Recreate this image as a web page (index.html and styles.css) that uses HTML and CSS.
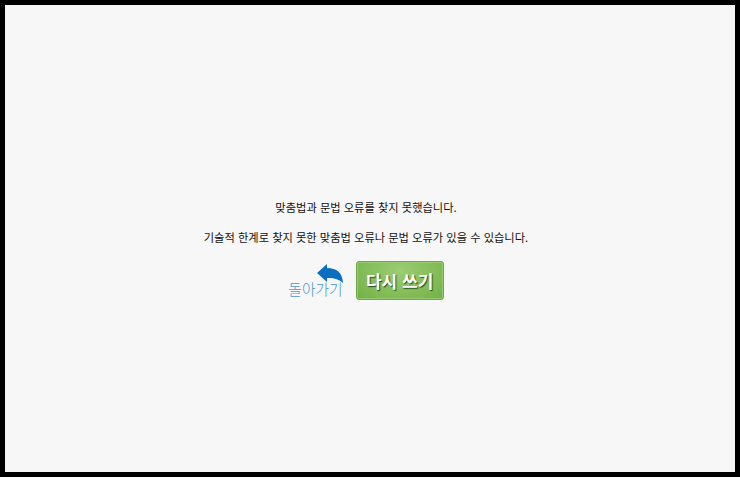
FILE: index.html
```html
<!DOCTYPE html>
<html lang="ko">
<head>
<meta charset="utf-8">
<title>맞춤법 검사</title>
<link rel="stylesheet" href="styles.css">
</head>
<body>
<main class="panel">
  <p class="msg">맞춤법과 문법 오류를 찾지 못했습니다.</p>
  <p class="msg">기술적 한계로 찾지 못한 맞춤법 오류나 문법 오류가 있을 수 있습니다.</p>
  <div class="actions">
    <a class="back" href="#">
      <svg class="back-icon" width="26" height="20" viewBox="0 0 26 20"><path d="M0 9 L10 0 L10 4 C20 4 25.500 9 26 19 C22 15 16 13.500 10 14 L10 18 Z" fill="#0a6fc0"/></svg>
      <span class="back-label">돌아가기</span>
    </a>
    <a class="retry" href="#">다시 쓰기</a>
  </div>
</main>
</body>
</html>
```
FILE: styles.css
```css
html, body {
  margin: 0;
  background: #fff;
}
.panel {
  box-sizing: border-box;
  width: 740px;
  height: 477px;
  border: 5px solid #000;
  background: #f7f7f7;
  padding: 193px 8px 0 0;
  display: flex;
  flex-direction: column;
  align-items: center;
  font-family: "Noto Sans CJK KR", "Noto Sans", sans-serif;
}
.msg {
  margin: 0 0 12px;
  font-size: 11.25px;
  line-height: 18px;
  color: #111;
}
.actions {
  display: flex;
  align-items: flex-start;
  gap: 13px;
  margin-top: 3px;
}
.back {
  display: flex;
  flex-direction: column;
  align-items: flex-end;
  margin-top: 3px;
  text-decoration: none;
}
.back-icon {
  display: block;
}
.back-label {
  margin-top: -4px;
  font-size: 14.75px;
  line-height: 18px;
  font-weight: 300;
  color: #4f95cb;
}
.retry {
  box-sizing: border-box;
  width: 88px;
  height: 39px;
  display: flex;
  align-items: center;
  justify-content: center;
  border: 1px solid #6ea54a;
  border-radius: 3px;
  background: radial-gradient(ellipse at 50% 25%, #9ccd74, #72b145);
  box-shadow: inset 0 0 0 1px #96cb70;
  color: #fff;
  font-size: 17px;
  font-weight: 700;
  text-decoration: none;
  text-shadow: 1px 1px 1px #274d16;
}
```
